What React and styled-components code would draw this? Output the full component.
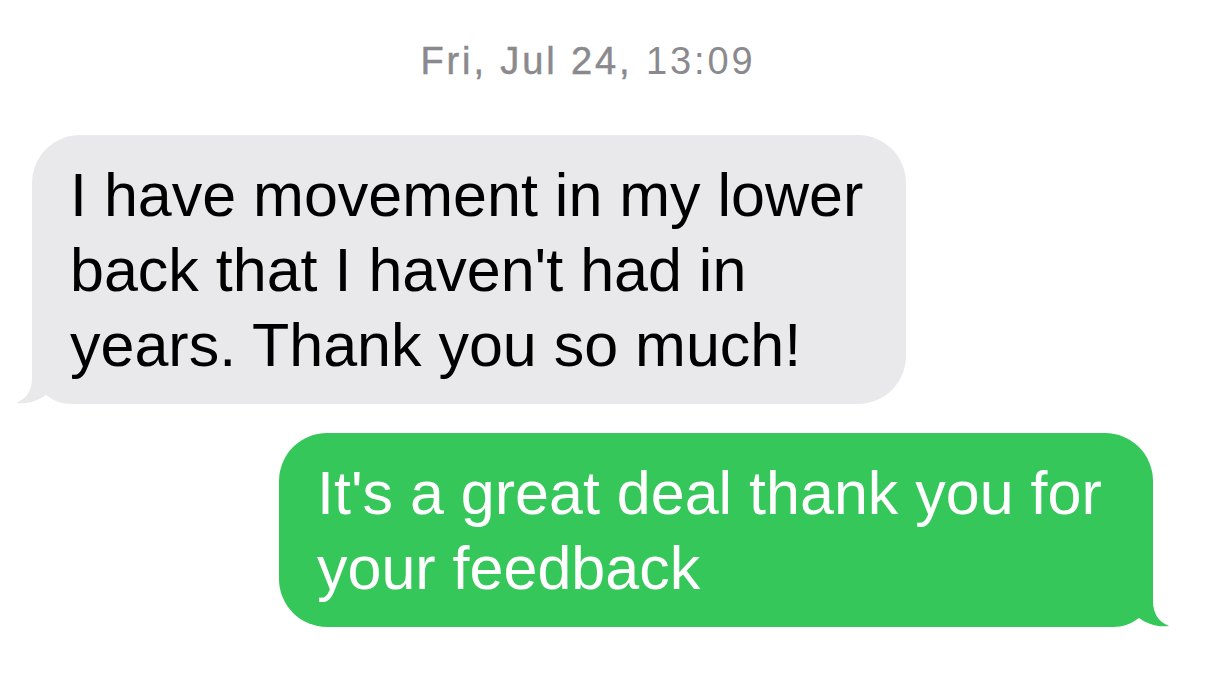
import React from "react"
import styled, { createGlobalStyle } from "styled-components"

const GlobalStyle = createGlobalStyle`
  html, body {
    margin: 0;
    padding: 0;
    background: #ffffff;
  }
  body {
    font-family: "Liberation Sans", Arial, sans-serif;
  }`;

const Thread = styled("div")`
  display: flex;
  flex-direction: column;
  padding: 39px 60px 0 32px;
  min-height: 679px;
  box-sizing: border-box;`;

const Stamp = styled("div")`
  align-self: center;
  margin-right: 9px;
  font-size: 38px;
  line-height: 44px;
  letter-spacing: 2.9px;
  color: #8a8a8e;
  white-space: nowrap;
  margin-bottom: 52px;
  b {
    font-weight: 400;
    -webkit-text-stroke: 0.5px #8a8a8e;
  }`;

const Bubble = styled("div")`
  position: relative;
  width: 874px;
  box-sizing: border-box;
  padding: 23px 36px 21px 38px;
  border-radius: 48px;
  font-size: 61px;
  line-height: 75px;
  align-self: ${p => (p.$mine ? "flex-end" : "flex-start")};
  background: ${p => (p.$mine ? "#35c759" : "#e9e9eb")};
  color: ${p => (p.$mine ? "#ffffff" : "#000000")};
  margin-bottom: 29px;`;

const Text = styled("span")`
  position: relative;
  display: block;`;

const Tail = styled("svg")`
  position: absolute;
  bottom: 0;
  width: 66px;
  height: 54px;
  ${p => (p.$mine ? "right: -16px; transform: scaleX(-1);" : "left: -16px;")}`;

function BubbleTail({ mine }) {
  return (
    <Tail $mine={mine} viewBox="0 0 66 54">
      <path
        d="M16,0 L16,28 C16,41 10,49 0,53 C11,54.5 22,51 30,45 C38,51 46,54 56,54 L66,54 L66,0 Z"
        fill={mine ? "#35c759" : "#e9e9eb"}
      />
    </Tail>
  )
}

export default function App() {
  return (
    <>
      <GlobalStyle />
      <Thread>
        <Stamp>
          <b>Fri, Jul 24,</b> 13:09
        </Stamp>
        <Bubble>
          <BubbleTail />
          <Text>
            I have movement in my lower
            <br />
            back that I haven't had in
            <br />
            years. Thank you so much!
          </Text>
        </Bubble>
        <Bubble $mine>
          <BubbleTail mine />
          <Text>
            It's a great deal thank you for
            <br />
            your feedback
          </Text>
        </Bubble>
      </Thread>
    </>
  )
}
